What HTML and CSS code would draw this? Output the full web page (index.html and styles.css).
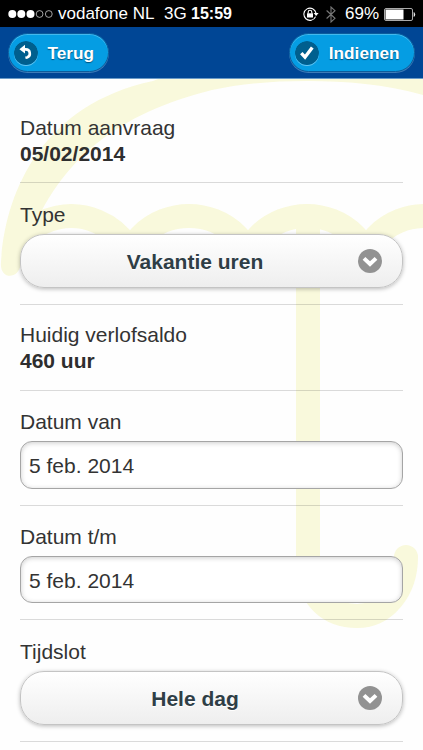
FILE: index.html
```
<!DOCTYPE html>
<html lang="nl">
<head>
<meta charset="utf-8" />
<meta name="viewport" content="width=device-width, initial-scale=1" />
<title>Verlof aanvragen</title>
<link rel="stylesheet" href="styles.css">
</head>

<body>
<div class="status">
	<svg class="signal" width="46" height="10" viewBox="0 0 46 10">
    	<circle cx="4.3" cy="5" r="4" fill="#fff" />
    	<circle cx="13.3" cy="5" r="4" fill="#fff" />
    	<circle cx="22.5" cy="5" r="4" fill="#fff" />
    	<circle cx="31.6" cy="5" r="3.4" fill="none" stroke="#ccc" stroke-width="0.8" />
    	<circle cx="40.8" cy="5" r="3.4" fill="none" stroke="#ccc" stroke-width="0.8" />
    </svg>
    <span class="carrier">vodafone NL</span>
    <span class="network">3G</span>
    <span class="time">15:59</span>
    <svg class="lock" width="16" height="14" viewBox="0 0 16 14">
    	<path d="M12.6 9.6A6.1 6.1 0 1 1 13 6.2" fill="none" stroke="#fff" stroke-width="1.1" />
    	<path d="M10.6 6H15.6L13.1 9z" fill="#fff" />
    	<rect x="4" y="6.3" width="6" height="4.2" fill="#fff" />
    	<path d="M5.2 6.5V5a1.8 1.8 0 0 1 3.6 0v1.5" fill="none" stroke="#fff" stroke-width="1.1" />
    </svg>
    <svg class="bluetooth" width="10" height="17" viewBox="0 0 10 17">
    	<path d="M0.6 4.5L9 12.3L5 16V1L9 4.7L0.6 12.5" fill="none" stroke="#777" stroke-width="1.1" />
    </svg>
    <span class="percent">69%</span>
    <svg class="battery" width="32" height="13" viewBox="0 0 32 13">
    	<rect x="0.5" y="0.5" width="28" height="12" rx="1.5" fill="none" stroke="#aaa" />
    	<rect x="1.5" y="1.5" width="18" height="10" fill="#fff" />
    	<path d="M30 4.5q1.6 2 0 4z" fill="#fff" stroke="#fff" stroke-width="0.6" />
    </svg>
</div>

<div class="header">
	<a class="btn">
    	<svg width="24" height="24" viewBox="0 0 24 24">
        	<circle cx="12" cy="12" r="12" fill="#005f8e" />
            <path d="M9 8.4H11.8A4.1 4.1 0 0 1 13 16.4L11.4 16.8" fill="none" stroke="#fff" stroke-width="2.6" />
            <path d="M5.4 8.2L11 3.8V12.6z" fill="#fff" />
        </svg>
        <span>Terug</span>
    </a>
	<a class="btn">
    	<svg width="24" height="24" viewBox="0 0 24 24">
        	<circle cx="12" cy="12" r="12" fill="#005f8e" />
            <path d="M6.3 12.2L10 16.2L17.3 6.4" fill="none" stroke="#fff" stroke-width="3.4" />
        </svg>
        <span>Indienen</span>
    </a>
</div>

<div class="content">
	<!-- umbrella behind the form -->
	<svg class="umbrella" width="423" height="671" viewBox="0 79 423 671">
    	<path fill="#f9f9dc" d="M1 262C5 195 40 105 153 81C190 66 240 57 308 57C360 57 400 62 423 68V95C385 84 345 81 308 81C270 81 240 84 212 90C120 113 50 160 21 264C18 281 -1 279 1 262z" />
        <g fill="none" stroke="#f9f9dc" stroke-width="24">
        	<path d="M23 236A68 68 0 0 1 139 284" />
        	<path d="M121 284A68 68 0 0 1 257 284" />
        	<path d="M239 284A68 68 0 0 1 375 284" />
        	<path d="M357 284A68 68 0 0 1 425 216" />
        	<path d="M308 226V566C308 598 330 616 357 616C385 616 406 590 406 557" stroke-linecap="round" />
        </g>
    </svg>

	<div class="row first">
    	<label>Datum aanvraag</label>
        <b>05/02/2014</b>
    </div>
	<div class="row">
    	<label>Type</label>
        <div class="select">
        	<span>Vakantie uren</span>
            <svg width="24" height="24" viewBox="0 0 24 24">
            	<circle cx="12" cy="12" r="12" fill="#929292" />
                <path d="M6 9.4L12 15L18 9.4" fill="none" stroke="#fff" stroke-width="4" />
            </svg>
        </div>
    </div>
	<div class="row saldo">
    	<label>Huidig verlofsaldo</label>
        <b>460 uur</b>
    </div>
	<div class="row date">
    	<label>Datum van</label>
        <div class="input">5 feb. 2014</div>
    </div>
	<div class="row date">
    	<label>Datum t/m</label>
        <div class="input">5 feb. 2014</div>
    </div>
	<div class="row">
    	<label>Tijdslot</label>
        <div class="select">
        	<span>Hele dag</span>
            <svg width="24" height="24" viewBox="0 0 24 24">
            	<circle cx="12" cy="12" r="12" fill="#929292" />
                <path d="M6 9.4L12 15L18 9.4" fill="none" stroke="#fff" stroke-width="4" />
            </svg>
        </div>
    </div>
</div>
</body>
</html>
```
FILE: styles.css
```
*{ margin:0; padding:0; box-sizing:border-box;}
body{ height:750px; overflow:hidden; background:#fefefe; color:#333; font-family:"Liberation Sans", Arial, Helvetica, sans-serif; font-size:21px;}
svg{ display:block; flex:none;}

.status{ height:27px; padding:1px 8px 0; display:flex; align-items:center; background:#000; color:#fff; font-size:17px; line-height:26px; white-space:nowrap;}
.carrier{ margin-left:4px; width:94px;}
.network{ margin-left:12px; width:22px;}
.time{ margin-left:5px; width:40px; font-weight:bold; font-size:16px;}
.lock{ margin-left:72px;}
.bluetooth{ margin-left:7px;}
.percent{ margin-left:9px; width:33px;}
.battery{ margin-left:6px;}

.header{ height:52px; padding:6px 8px 0; display:flex; justify-content:space-between; align-items:flex-start; background:#004695; border-bottom:1px solid #6b9bc8;}
.btn{ height:39px; padding:0 14.5px 0 5px; display:flex; align-items:center; border:1px solid #0b5c9c; border-radius:20px; background:#059de3; box-shadow:inset 0 1px 0 #42b8ee, 0 1px 0 #3f7cb8; color:#fff; font-size:17.2px; font-weight:bold; text-shadow:0 1px 1px #00527c;}
.btn svg{ border-radius:12px; box-shadow:0 1px 0 rgba(255,255,255,0.4);}
.btn span{ margin-left:9.5px; padding-top:1px;}

.content{ height:671px; padding:0 20px; position:relative; overflow:hidden;}
.umbrella{ position:absolute; left:0; top:0; z-index:-1;}
.row{ padding:19px 0 16px; border-bottom:1px solid rgba(0,0,0,0.14);}
.row label,.row b{ display:block; line-height:26px;}
.first{ padding:36px 0 15px;}
.saldo{ padding:17px 0 16px;}
.date{ padding:18px 0 16px;}
.first b,.saldo b{ color:#2e2e2e;}
.input{ height:47.5px; margin-top:6px; padding:0 8px; border:1px solid #a5a5a5; border-radius:12px; background:#fff; box-shadow:inset 0 1px 5px rgba(0,0,0,0.2); line-height:47px;}
.select{ height:54px; margin-top:6px; padding:0 20px 0 11px; display:flex; align-items:center; border:1px solid #c4c4c4; border-radius:24px; background:linear-gradient(#fff,#eee); box-shadow:0 1px 4px rgba(0,0,0,0.28); color:#2f3e46; font-weight:bold;}
.select span{ flex:1; padding-top:2px; text-align:center; text-shadow:0 1px 0 #fff;}
```
